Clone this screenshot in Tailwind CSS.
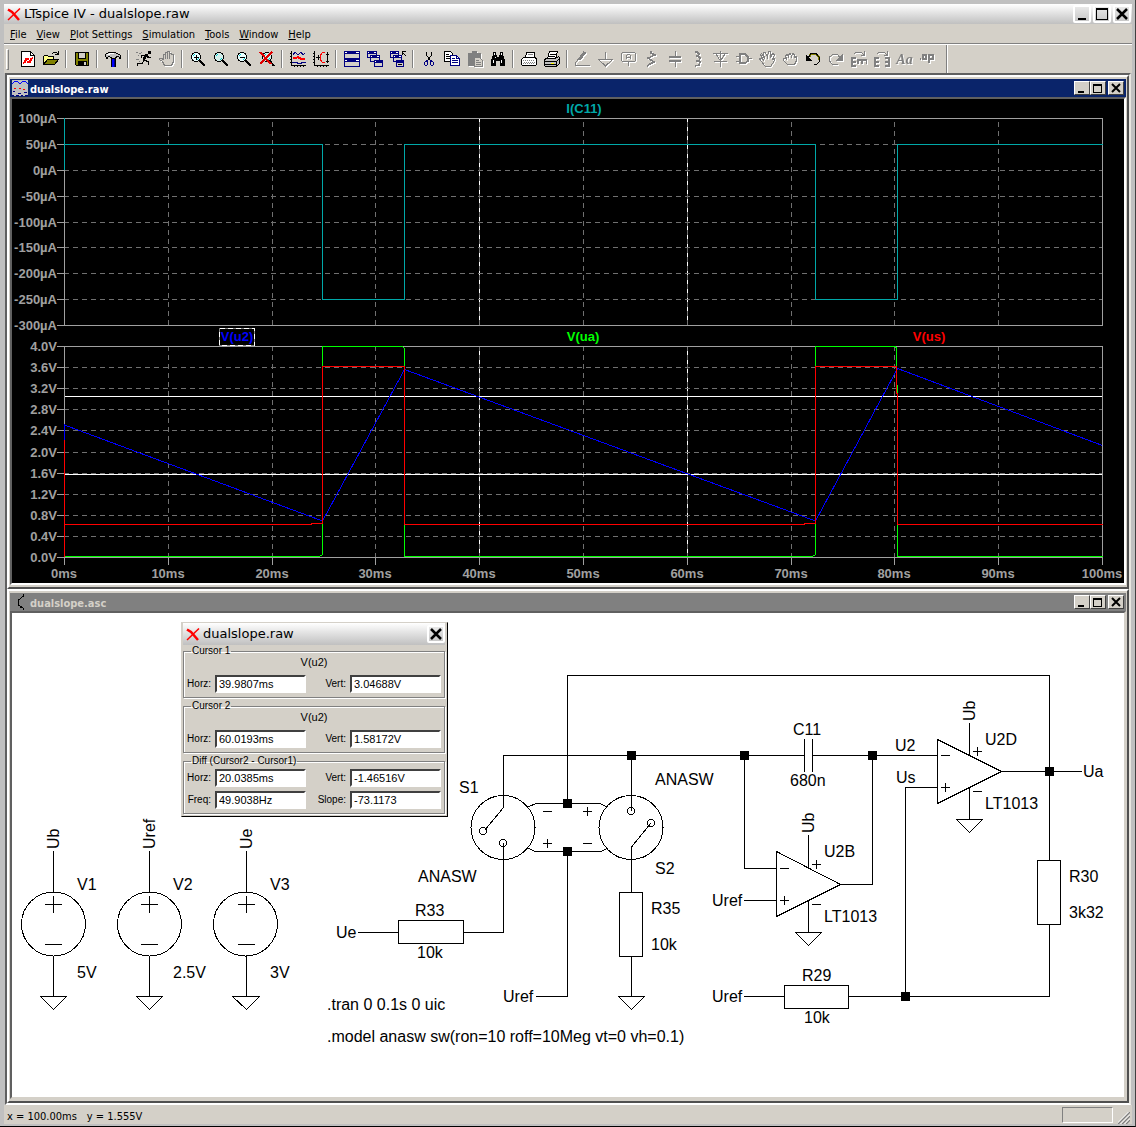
<!DOCTYPE html>
<html lang="en">

<head>
    <meta charset="UTF-8">
    <meta name="viewport" content="width=device-width, initial-scale=1.0">
    <title>LTspice IV - dualslope.raw</title>
    <script src="https://cdn.jsdelivr.net/npm/@tailwindcss/browser@4"></script>
</head>

<body class="bg-black text-black text-[11px] font-['DejaVu_Sans_Condensed','DejaVu_Sans',sans-serif]">

    <div class="h-screen flex flex-col bg-[#c0c0c0] pt-1 pl-1 pr-[3px] pb-[2px] border-r border-b border-r-[#404040] border-b-black">

        <!-- title bar -->
        <header class="h-5 shrink-0 flex items-center bg-linear-to-b from-white to-[#c0c0c0] pl-[3px] pr-px">
            <svg class="w-[14px] h-[13px]" viewBox="0 0 14 13" fill="none" stroke="#f00"><path stroke-width="2.5" d="M1 1.5 5 4l7 8"/><path stroke-width="1.5" d="M13 .5 1 12"/></svg>
            <h1 class="ml-[3px] text-[13px] leading-5 font-['DejaVu_Sans',sans-serif] whitespace-nowrap">LTspice IV - dualslope.raw</h1>
            <div class="ml-auto flex gap-[2px]">
                <button aria-label="Minimize" class="size-[18px] rounded-xs border-2 border-white bg-linear-to-b from-[#e8e8e8] to-[#c8c8c8]"><svg class="size-[14px]" viewBox="0 0 14 14"><path d="M3 11h8v2H3z"/></svg></button>
                <button aria-label="Maximize" class="size-[18px] rounded-xs border-2 border-white bg-linear-to-b from-[#e8e8e8] to-[#c8c8c8]"><svg class="size-[14px]" viewBox="0 0 14 14"><path fill-rule="evenodd" d="M1 1h12v12H1zM2 3v9h10V3z"/></svg></button>
                <button aria-label="Close" class="size-[18px] rounded-xs border-2 border-white bg-linear-to-b from-[#e8e8e8] to-[#c8c8c8]"><svg class="size-[14px]" viewBox="0 0 14 14" stroke="#000" stroke-width="2.5"><path d="M2 2l10 10M12 2 2 12"/></svg></button>
            </div>
        </header>

        <!-- menu -->
        <nav class="h-5 shrink-0 flex items-center gap-[10px] bg-[#d4d0c8] pl-[6px] pt-1 border-b border-[#808080]">
            <button><u>F</u>ile</button>
            <button><u>V</u>iew</button>
            <button><u>P</u>lot Settings</button>
            <button><u>S</u>imulation</button>
            <button><u>T</u>ools</button>
            <button><u>W</u>indow</button>
            <button><u>H</u>elp</button>
        </nav>

        <!-- toolbar -->
        <div class="h-[29px] shrink-0 flex bg-[#d4d0c8] border-t border-white">
            <div class="flex items-center pl-[2px] pr-[7px] border-r border-[#808080] [&_svg]:size-4 [&_svg]:[shape-rendering:crispEdges] [&_button]:w-[23px] [&_button]:h-6 [&_button]:flex [&_button]:items-center [&_button]:justify-center [&_i]:w-px [&_i]:h-[18px] [&_i]:mx-[3px] [&_i]:bg-[#808080] [&_i]:border-r [&_i]:border-white [&_i]:box-content [&_button:disabled]:text-[#808080] [&_button:disabled]:drop-shadow-[1px_1px_0_#fff]">
                <span class="w-[3px] h-[21px] mr-[7px] border border-l-white border-t-white border-r-[#808080] border-b-[#808080]"></span>

                <button title="New Schematic"><svg viewBox="0 0 16 16"><path fill="#fff" stroke="#000" d="M1.500.5h9l4 4v10.500h-13z"/><path fill="none" stroke="#000" d="M10.500.5v4h4"/><path fill="none" stroke="#f00" stroke-width="2" d="M3 12l2-1 1-3h3M7 11h3l1-3 2-1"/></svg></button>
                <button title="Open"><svg viewBox="0 0 16 16"><path fill="#ff8" stroke="#000" d="M.5 13.500V5.500l1-1h3l1 1h5v3h-6z"/><path fill="#808000" stroke="#000" d="M.5 13.500l4-5h11l-4 5z"/><path fill="none" stroke="#000" d="M9 3l2-2h2l2 2M15.500 0v4M12 3.500h3"/></svg></button>
                <i></i>
                <button title="Save"><svg viewBox="0 0 16 16"><path fill="#808000" stroke="#000" d="M1.500 1.500h13v13h-12l-1-1z"/><path fill="#d4d0c8" stroke="#000" d="M4.500 1.500h7v6h-7z"/><path d="M4 10h9v5H4z"/><path fill="#d4d0c8" d="M10 11h2v3h-2z"/></svg></button>
                <i></i>
                <button title="Control Panel"><svg viewBox="0 0 16 16"><path d="M3 1h8v1h2v1h2v1h1v4h-2V6h-2v1h-2v1H6V7H5V6H3v2H1V6H0V3h1V2h2z"/><path fill="#c0c0c0" d="M3 2h8v1h2v1h2v2h-1V5h-3v1h-1v1H7V6H5V5H3v1H1V3h2z"/><path fill="#fff" d="M4 2h5v1H4zM2 3h3v1H2z"/><path d="M6 7h5v9H6z"/><path fill="#00f" d="M7 8h2v8H7z"/><path fill="#000080" d="M9 8h1v8H9z"/></svg></button>
                <i></i>
                <button title="Run"><svg viewBox="0 0 16 16"><path d="M12 0h3v3h-3zM9 3h3v2h1v1h2v1h-4V6h-1v2H9v1h2v1h2v4h-1v-3h-2v-1H8v1H7v2H2v2H1v-3h5v-1h1V6h1V5H6v2H5V4h4z"/><path fill="#808080" d="M0 1h2v1H0zM3 2h2v1H3zM2 4h1v1H2zM5 1h1v1H5zM0 8h3v1H0zM3 10h1v1H3z"/></svg></button>
                <button title="Halt" disabled><svg viewBox="0 0 16 16" fill="#d4d0c8" stroke="currentColor"><path d="M5.500 14.500l-2-4-3-2v-1h2l2 1V3.500h2v-2h2v-1h2v2h2v1h2v7l-2 4zM6.500 4v4M8.500 2v6M10.500 3v5"/></svg></button>
                <i></i>
                <button title="Zoom Area"><svg viewBox="0 0 16 16" fill="none" stroke="#000"><circle cx="6" cy="6" r="4.500" fill="#e8ffff"/><path stroke="#0cc" d="M3 5l2-2M7 9l2-2"/><path d="M6.500 3.500v5M4 6.500h5"/><path stroke-width="2" d="M10 10l5 5"/></svg></button>
                <button title="Pan"><svg viewBox="0 0 16 16" fill="none" stroke="#000"><circle cx="6" cy="6" r="4.500" fill="#d4f0ec"/><path stroke="#0cc" d="M3 5l2-2M7 9l2-2"/><path stroke-width="2" d="M10 10l5 5"/></svg></button>
                <button title="Zoom Back"><svg viewBox="0 0 16 16" fill="none" stroke="#000"><circle cx="6" cy="6" r="4.500" fill="#e8ffff"/><path stroke="#0cc" d="M3 5l2-2M7 9l2-2"/><path d="M4 6.500h5"/><path stroke-width="2" d="M10 10l5 5"/></svg></button>
                <button title="Zoom Fit"><svg viewBox="0 0 16 16" fill="none" stroke="#000"><circle cx="8" cy="6" r="4.500" fill="#d4f0ec"/><path stroke="#0cc" d="M5 5l2-2M9 9l2-2"/><path stroke-width="2" d="M11 10l4 5"/><path stroke="#e00000" stroke-width="2" d="M1 1l11 12M13 1 1 13"/></svg></button>
                <i></i>
                <button title="Autorange Y"><svg viewBox="0 0 16 16" fill="none" stroke="#000"><path d="M1.500 0v14.500H16M0 2.500h1M0 5.500h1M0 8.500h1M0 11.500h1M4.500 15v1M7.500 15v1M10.500 15v1M13.500 15v1"/><path stroke="#000080" d="M3 4l2-3 3 3 3-3 2 3 2-2M2 11.500h5l1 1h3l1-1h4"/><path stroke="#f00" stroke-width="2" d="M3 7h3l2-1 3 2h4"/></svg></button>
                <button title="Autorange"><svg viewBox="0 0 16 16" fill="none" stroke="#000"><path d="M1.500 0v14.500H16M0 2.500h1M0 5.500h1M0 8.500h1M0 11.500h1M4.500 15v1M7.500 15v1M10.500 15v1M13.500 15v1M14.500 1v11M13 3.500h3M13 10.500h3M3 6.500h4M5.500 4v5"/><path stroke="#f00" d="M12 1.500H9.500L7.500 4v5l2 2.500H12"/></svg></button>
                <i></i>
                <button title="Tile Windows"><svg viewBox="0 0 16 16"><path fill="#d4d0c8" stroke="#000080" d="M.5.5h15v7H.5zM.5 8.500h15v7H.5z"/><path fill="#000080" d="M0 0h16v3H0zM0 8h16v3H0z"/><path fill="#fff" d="M1 1h2v1H1zM12 1h3v1h-3zM1 9h2v1H1zM12 9h3v1h-3z"/></svg></button>
                <button title="Cascade Windows"><svg viewBox="0 0 16 16"><g fill="#d4d0c8" stroke="#000080"><path d="M.5.5h9v6h-9z"/><path d="M3.500 4.500h9v6h-9z"/><path d="M7.500 9.500h8v6h-8z"/></g><path fill="#000080" d="M0 0h10v3H0zM3 4h10v3H3zM7 9h9v3H7z"/><path fill="#fff" d="M1 1h1v1H1zM7 1h2v1H7zM4 5h1v1H4zM10 5h2v1h-2zM8 10h1v1H8z"/></svg></button>
                <button title="Close All"><svg viewBox="0 0 16 16"><g fill="#d4d0c8" stroke="#000080"><path d="M.5.5h8v6h-8z"/><path d="M3.500 4.500h8v6h-8z"/><path d="M6.500 9.500h7v6h-7z"/></g><path fill="#000080" d="M0 0h9v3H0zM3 4h9v3H3zM6 9h8v3H6z"/><path fill="#fff" d="M1 1h1v1H1zM6 1h2v1H6zM4 5h1v1H4zM9 5h2v1H9z"/><path fill="none" stroke="#000" d="M16 5l-4-4M12.500 4V.5H16M8 13.500h4"/></svg></button>
                <i></i>
                <button title="Cut"><svg viewBox="0 0 16 16" fill="none" stroke="#000"><path d="M5.500 1v3l4 6M10.500 1v3l-4 6"/><g stroke="#000080"><path d="M6.500 9.500l-2 1-1 1v2l1 1h1l1-1v-3zM9.500 9.500l2 1 1 1v2l-1 1h-1l-1-1v-3z"/></g></svg></button>
                <button title="Copy"><svg viewBox="0 0 16 16"><path fill="#fff" stroke="#000" d="M.5.5h6l2 2v8h-8z"/><path stroke="#000" d="M2 3.500h3M2 5.500h5M2 7.500h5"/><path fill="#fff" stroke="#000080" d="M6.500 4.500h6l3 3v7h-9z"/><path stroke="#000080" d="M8 7.500h3M8 9.500h6M8 11.500h6M12.500 4v3h3" fill="none"/></svg></button>
                <button title="Paste" disabled><svg viewBox="0 0 16 16"><path fill="#808080" d="M1 2h4V0h5v2h4v5H8v8H1z"/><path fill="#d4d0c8" stroke="#808080" d="M7.500 6.500h5l3 3v6h-8z"/><path stroke="#808080" d="M9 9.500h3M9 11.500h5M9 13.500h5"/></svg></button>
                <button title="Find"><svg viewBox="0 0 16 16"><path d="M3 1h3v3h1v2h2V4h1V1h3v3l2 5v6h-5v-5H6v5H1V9l2-5z"/><path fill="#fff" d="M4 2h1v2H4zM11 2h1v2h-1zM3 9h1v3H3zM11 9h1v3h-1zM5 6h1v1H5z"/></svg></button>
                <i></i>
                <button title="Print Setup"><svg viewBox="0 0 16 16"><path fill="#fff" stroke="#000" d="M4.500 6.500l1-5h8v5"/><path stroke="#808080" d="M7 3.500h5"/><path fill="#fff" stroke="#000" d="M.5 8.500l2-2h12l1 2v5l-1 1h-13l-1-1z"/><path stroke="#808080" stroke-dasharray="1 1" d="M2 9.500h12M3 11.500h11M2 12.500h12"/></svg></button>
                <button title="Print"><svg viewBox="0 0 16 16"><path fill="#fff" stroke="#000" d="M3.500 7.500l2-7h8l-2 7"/><path stroke="#000" d="M6 3.500h6M5 5.500h6"/><path fill="#c0c0c0" stroke="#000" d="M.5 8.500l2-1h9l3-2 1 1v6l-3 3h-11l-1-1z"/><path stroke="#000" fill="none" d="M.5 10.500h12l3-3M12.500 10v5M1 13.500h11"/><path fill="#ff0" d="M7 12h3v1H7z"/></svg></button>
                <i></i>
                <button title="Wire" disabled><svg viewBox="0 0 16 16" fill="none" stroke="currentColor"><path stroke-width="3" d="M10 1 4 9"/><path d="M3.500 8l-3 4v2.500H15"/></svg></button>
                <button title="Ground" disabled><svg viewBox="0 0 16 16" fill="none" stroke="currentColor"><path d="M7.500 1v7M0 8.500h15M1 9l6.500 6L14 9"/></svg></button>
                <button title="Label Net" disabled><svg viewBox="0 0 16 16" fill="none" stroke="currentColor"><path d="M1.500 1.500h12l1 1v7l-1 1h-12l-1-1v-7zM7.500 11v4M5.500 8V4.500l1-1h2l1 1V8M5 6.500h5"/></svg></button>
                <button title="Resistor" disabled><svg viewBox="0 0 16 16" fill="none" stroke="currentColor"><path stroke-width="1.500" d="M7 0v2l4 2-7 3 6 4-4 2-3 2"/></svg></button>
                <button title="Capacitor" disabled><svg viewBox="0 0 16 16" fill="none" stroke="currentColor"><path stroke-width="2" d="M2 6h12M2 10h12"/><path d="M8.500 0v5M8.500 11v5"/></svg></button>
                <button title="Inductor" disabled><svg viewBox="0 0 16 16" fill="none" stroke="currentColor"><path stroke-width="1.500" d="M5 1h2l2 2-1 2H6h2l2 2-1 3H6h2l2 1-1 3-4 1"/></svg></button>
                <button title="Diode" disabled><svg viewBox="0 0 16 16" fill="none" stroke="currentColor"><path d="M0 2.500h15M3 3l4.500 7L12 3M1 10.500h13M7.500 0v16"/></svg></button>
                <button title="Component" disabled><svg viewBox="0 0 16 16" fill="none" stroke="currentColor"><path stroke-width="1.500" d="M4 3h5l3 3v4l-3 2H4z"/><path d="M0 5.500h4M0 10.500h4M12 7.500h4"/></svg></button>
                <button title="Move" disabled><svg viewBox="0 0 16 16" fill="none" stroke="currentColor"><path d="M6.500 15.500l-5-6-1-2h2l2 2-3-6 1-1 3 5-1-6h2l2 5 1-6h2v6l2-4 2 1-2 5 2-1v2l-4 6z"/></svg></button>
                <button title="Drag" disabled><svg viewBox="0 0 16 16" fill="none" stroke="currentColor"><path d="M5.500 13.500l-4-4v-2h2l1 1-1-4 2-1 1 3v-3l2-1 1 3 1-3 2 1v3l2-1v4l-2 4z"/></svg></button>
                <button title="Undo"><svg viewBox="0 0 16 16" fill="none" stroke="#000"><path stroke="#808000" stroke-width="2" d="M4 6l2-3h5l3 3v3"/><path d="M3 7l3-4.500h5l3.500 4v4l-3 3h-3M1.500 4v5.500H7"/><path fill="#000" d="M1 4l5 5H1z"/></svg></button>
                <button title="Redo" disabled><svg viewBox="0 0 16 16" fill="none" stroke="currentColor"><path d="M12 7 9.500 3.500H5L1.500 6v4l3 3.500h5"/><path fill="currentColor" d="M14 4v5H9z"/></svg></button>
                <button title="Rotate" disabled><svg viewBox="0 0 16 16" fill="none" stroke="currentColor"><path d="M3 3l2-2h5l3 3M13.500 0v4.500H10"/><path stroke-width="1.500" d="M5 7H1v8h4M1 11h4M7 13V9h9v4M11 9v4"/></svg></button>
                <button title="Mirror" disabled><svg viewBox="0 0 16 16" fill="none" stroke="currentColor"><path d="M3 3l2-2h5l3 3M13.500 0v4.500H10"/><path stroke-width="1.500" d="M5 7H1v8h4M1 11h4M11 7h4v8h-4M15 11h-4"/></svg></button>
                <button title="Text" disabled class="font-['Liberation_Serif',serif] italic font-bold text-[14px]">Aa</button>
                <button title="SPICE Directive" disabled><svg viewBox="0 0 16 16" fill="none" stroke="currentColor"><path stroke-width="1.500" d="M3 4h3v4H3zM9 12V4h4v4H9M0 8h1"/></svg></button>
            </div>
            <div class="border-l border-white"></div>
        </div>

        <!-- MDI area -->
        <main class="mx-px flex-1 min-h-0 flex flex-col border-2 border-t-[#606060] border-l-[#606060] border-r-[#e8e6e0] border-b-white bg-[#808080]">

            <!-- waveform window -->
            <section class="flex-1 min-h-0 flex flex-col bg-[#d4d0c8] border-2 border-t-white border-l-white border-r-[#505050] border-b-[#505050] px-px py-[2px]">
                <div class="h-[18px] shrink-0 flex items-center bg-[#0a246a] text-white px-[2px]">
                    <svg class="size-4" viewBox="0 0 16 16" fill="none" shape-rendering="crispEdges"><path fill="#c0c0c0" d="M0 0h16v16H0z"/><path stroke="#00f" d="M0 4l3-3h2l3 3 3-3h2l3 3"/><path fill="#f00" d="M2 8h2v1H2zM7 8h2v1H7zM11 9h2v1h-2z"/><path stroke="#000080" d="M1 12l2-1M6 13h3M12 12h3M0 15.500h2M4 15.500h3M9 15.500h2M13 15.500h3"/></svg>
                    <h2 class="ml-[2px] pt-[3px] font-bold leading-4">dualslope.raw</h2>
                    <div class="ml-auto flex">
                        <button aria-label="Minimize plot" class="w-4 h-[14px] bg-[#d4d0c8] border border-t-white border-l-white border-r-[#404040] border-b-[#404040]"><svg class="w-[14px] h-3" viewBox="0 0 14 12"><path d="M3 9h6v2H3z"/></svg></button>
                        <button aria-label="Maximize plot" class="w-4 h-[14px] bg-[#d4d0c8] border border-t-white border-l-white border-r-[#404040] border-b-[#404040]"><svg class="w-[14px] h-3" viewBox="0 0 14 12"><path fill-rule="evenodd" d="M2 2h9v9H2zM3 4v6h7V4z"/></svg></button>
                        <button aria-label="Close plot" class="ml-[2px] w-4 h-[14px] bg-[#d4d0c8] border border-t-white border-l-white border-r-[#404040] border-b-[#404040]"><svg class="w-[14px] h-3" viewBox="0 0 14 12" stroke="#000" stroke-width="2"><path d="M3 2l8 8M11 2l-8 8"/></svg></button>
                    </div>
                </div>
                <div class="flex-1 min-h-0 bg-black border-2 border-t-[#606060] border-l-[#606060] border-r-white border-b-white">
                    <svg class="block w-full h-full font-['Liberation_Sans',sans-serif] font-bold text-[13px]" viewBox="12 99 1112 484" fill="none" shape-rendering="crispEdges">
                        <!-- cursors -->
                        <path stroke="#fff" d="M479.500 118v207M687.500 118v207M479.500 346v211M687.500 346v211"/>
                        <!-- grid -->
                        <g stroke="#707070" stroke-dasharray="5 4">
                            <path d="M168.500 122v203M272.500 122v203M375.500 122v203M479.500 122v203M583.500 122v203M687.500 122v203M791.500 122v203M894.500 122v203M998.500 122v203"/>
                            <path d="M64 144.500h1038M64 170.500h1038M64 196.500h1038M64 222.500h1038M64 247.500h1038M64 273.500h1038M64 299.500h1038"/>
                            <path d="M168.500 346v211M272.500 346v211M375.500 346v211M479.500 346v211M583.500 346v211M687.500 346v211M791.500 346v211M894.500 346v211M998.500 346v211"/>
                            <path d="M64 367.500h1038M64 388.500h1038M64 409.500h1038M64 430.500h1038M64 452.500h1038M64 473.500h1038M64 494.500h1038M64 515.500h1038M64 536.500h1038"/>
                        </g>
                        <!-- frames and ticks -->
                        <g stroke="#a0a0a0">
                            <path d="M64.500 118.500h1038v207h-1038zM64.500 346.500h1038v211h-1038z"/>
                            <path d="M57 118.500h7M57 144.500h7M57 170.500h7M57 196.500h7M57 222.500h7M57 247.500h7M57 273.500h7M57 299.500h7M57 325.500h7"/>
                            <path d="M57 346.500h7M57 367.500h7M57 388.500h7M57 409.500h7M57 430.500h7M57 452.500h7M57 473.500h7M57 494.500h7M57 515.500h7M57 536.500h7M57 557.500h7"/>
                            <path d="M64.500 557v8M168.500 557v8M272.500 557v8M375.500 557v8M479.500 557v8M583.500 557v8M687.500 557v8M791.500 557v8M894.500 557v8M998.500 557v8M1102.500 557v8"/>
                        </g>
                        <!-- traces -->
                        <path stroke="#00a8a8" d="M64.500 170v-52M64.500 144.500h258v155h82v-155h411v155h82v-155h205"/>
                        <path stroke="#fff" d="M65 396.500h1037M65 474.500h1037"/>
                        <path stroke="#00f" d="M64.500 440v-15l258 96L404.500 369.500l411 151.500L897.500 368.500l205 77"/>
                        <path stroke="#0f0" d="M64.500 556.500h255l3-2v-208h80l2 2v208h408l3-2v-208h80l1 2v36l1 2v170h205"/>
                        <path stroke="#f00" d="M64.500 557V440M64.500 524.500h247v-1h11v-157h82v158h400v-1h11v-157h81v27h1v131h205"/>
                        <!-- y axis -->
                        <g fill="#a0a0a0" text-anchor="end">
                            <text x="57" y="123">100µA</text><text x="57" y="149">50µA</text><text x="57" y="175">0µA</text>
                            <text x="57" y="201">-50µA</text><text x="57" y="227">-100µA</text><text x="57" y="252">-150µA</text>
                            <text x="57" y="278">-200µA</text><text x="57" y="304">-250µA</text><text x="57" y="330">-300µA</text>
                            <text x="57" y="351">4.0V</text><text x="57" y="372">3.6V</text><text x="57" y="393">3.2V</text>
                            <text x="57" y="414">2.8V</text><text x="57" y="435">2.4V</text><text x="57" y="457">2.0V</text>
                            <text x="57" y="478">1.6V</text><text x="57" y="499">1.2V</text><text x="57" y="520">0.8V</text>
                            <text x="57" y="541">0.4V</text><text x="57" y="562">0.0V</text>
                        </g>
                        <!-- x axis -->
                        <g fill="#a0a0a0" text-anchor="middle">
                            <text x="64" y="578">0ms</text><text x="168" y="578">10ms</text><text x="272" y="578">20ms</text>
                            <text x="375" y="578">30ms</text><text x="479" y="578">40ms</text><text x="583" y="578">50ms</text>
                            <text x="687" y="578">60ms</text><text x="791" y="578">70ms</text><text x="894" y="578">80ms</text>
                            <text x="998" y="578">90ms</text><text x="1102" y="578">100ms</text>
                        </g>
                        <!-- trace labels -->
                        <path stroke="#808080" d="M219.500 328.500h35v17h-35z"/>
                        <path stroke="#fff" stroke-dasharray="5 3" d="M219.500 328.500h35v17h-35z"/>
                        <g text-anchor="middle">
                            <text x="584" y="113" fill="#00a8a8">I(C11)</text>
                            <text x="237" y="341" fill="#00f">V(u2)</text>
                            <text x="583" y="341" fill="#0f0">V(ua)</text>
                            <text x="929" y="341" fill="#f00">V(us)</text>
                        </g>
                    </svg>
                </div>
            </section>

            <!-- schematic window -->
            <section class="flex-1 min-h-0 flex flex-col bg-[#d4d0c8] border-2 border-t-white border-l-white border-r-[#505050] border-b-[#505050] px-px py-[2px]">
                <div class="h-[18px] shrink-0 flex items-center bg-[#808080] text-[#d4d0c8] px-[2px]">
                    <svg class="size-4" viewBox="0 0 16 16" fill="none" shape-rendering="crispEdges"><path stroke="#000" d="M11.500 0v2l-5 4v5l3 2M8 13l3 1v2"/></svg>
                    <h2 class="ml-[2px] pt-[3px] font-bold leading-4">dualslope.asc</h2>
                    <div class="ml-auto flex">
                        <button aria-label="Minimize schematic" class="w-4 h-[14px] bg-[#d4d0c8] border border-t-white border-l-white border-r-[#404040] border-b-[#404040]"><svg class="w-[14px] h-3" viewBox="0 0 14 12"><path d="M3 9h6v2H3z"/></svg></button>
                        <button aria-label="Maximize schematic" class="w-4 h-[14px] bg-[#d4d0c8] border border-t-white border-l-white border-r-[#404040] border-b-[#404040]"><svg class="w-[14px] h-3" viewBox="0 0 14 12"><path fill-rule="evenodd" d="M2 2h9v9H2zM3 4v6h7V4z"/></svg></button>
                        <button aria-label="Close schematic" class="ml-[2px] w-4 h-[14px] bg-[#d4d0c8] border border-t-white border-l-white border-r-[#404040] border-b-[#404040]"><svg class="w-[14px] h-3" viewBox="0 0 14 12" stroke="#000" stroke-width="2"><path d="M3 2l8 8M11 2l-8 8"/></svg></button>
                    </div>
                </div>
                <div class="relative flex-1 min-h-0 bg-white border-2 border-t-[#606060] border-l-[#606060] border-r-[#d4d0c8] border-b-[#d4d0c8]">
                    <svg class="block w-full h-full font-['Liberation_Sans',sans-serif] text-[16px]" viewBox="12 613 1112 484">
                        <g fill="none" stroke="#000" shape-rendering="crispEdges">
                            <!-- sources V1 V2 V3 -->
                            <circle cx="53.500" cy="924" r="32"/><circle cx="149.500" cy="924" r="32"/><circle cx="245.500" cy="924" r="32"/>
                            <path d="M53.500 851v41M53.500 956v40M45 904.500h17M53.500 896v17M45 944.500h17M40.500 996.500h26l-13 13z"/>
                            <path d="M149.500 851v41M149.500 956v40M141 904.500h17M149.500 896v17M141 944.500h17M136.500 996.500h26l-13 13z"/>
                            <path d="M246.500 851v41M246.500 956v40M238 904.500h17M246.500 896v17M238 944.500h17M232.500 996.500h27l-13 13z"/>
                            <!-- switches -->
                            <circle cx="503" cy="827.500" r="32"/><circle cx="631" cy="827.500" r="32"/>
                            <circle cx="483" cy="831" r="3.500"/><circle cx="503" cy="843" r="3.500"/>
                            <circle cx="631" cy="811" r="3.500"/><circle cx="651" cy="823" r="3.500"/>
                            <path d="M503.500 755.500v52l-19 23M503.500 843v89.500M631.500 755v56M651 823l-19.500 24v45"/>
                            <path d="M528 807l8-3.500h64l6 3M528 848l7 3.500h66l6-3"/>
                            <path d="M543 811.500h9M583 811.500h9M587.500 807v9M543 843.500h9M547.500 839v9M583 843.500h9"/>
                            <!-- wires -->
                            <path d="M567.500 803V675.500h482V860M503 755.500h301M812 755.500h125M567.500 851v145.500h-32"/>
                            <path d="M358 932.500h40M463 932.500h41M631.500 956v40M744.500 755v113.500h32M872.500 755v129.500h-32M744 900.500h32"/>
                            <path d="M937 787.500h-31.500v209M1001 771.500h81M1049.500 924v72.500H848M744 996.500h40"/>
                            <!-- R33 R35 R30 R29 C11 -->
                            <path d="M398.500 920.500h65v23h-65zM619.500 892.500h23v64h-23zM1037.500 860.500h23v64h-23zM784.500 985.500h64v23h-64zM804.500 739v33M812.500 739v33"/>
                            <path d="M618.500 996.500h26l-13 13z"/>
                            <!-- op amps -->
                            <path d="M937.500 739.500v64l64-32zM969.500 723v32M969.500 788v31M956.500 819.500h26l-13 13z"/>
                            <path d="M941 755.500h9M941 787.500h9M945.500 783v9M973 751.500h9M977.500 747v9M973 791.500h9"/>
                            <path d="M776.500 851.500v65l64-32zM808.500 835v33M808.500 901v31M795.500 932.500h26l-13 13z"/>
                            <path d="M780 868.500h9M780 900.500h9M784.500 896v9M812 864.500h9M816.500 860v9M812 904.500h9"/>
                        </g>
                        <!-- junctions -->
                        <path d="M627 751h9v9h-9zM740 751h9v9h-9zM868 751h9v9h-9zM1045 767h9v9h-9zM563 799h9v9h-9zM563 847h9v9h-9zM901 992h9v9h-9z"/>

                        <text transform="translate(59 849) rotate(-90)">Ub</text>
                        <text transform="translate(155 849) rotate(-90)">Uref</text>
                        <text transform="translate(252 849) rotate(-90)">Ue</text>
                        <text x="77" y="890">V1</text><text x="173" y="890">V2</text><text x="270" y="890">V3</text>
                        <text x="77" y="978">5V</text><text x="173" y="978">2.5V</text><text x="270" y="978">3V</text>

                        <text x="459" y="793">S1</text><text x="655" y="785">ANASW</text>
                        <text x="655" y="874">S2</text><text x="418" y="882">ANASW</text>
                        <text x="336" y="938">Ue</text><text x="415" y="916">R33</text><text x="417" y="958">10k</text>
                        <text x="651" y="914">R35</text><text x="651" y="950">10k</text><text x="503" y="1002">Uref</text>
                        <text x="327" y="1010">.tran 0 0.1s 0 uic</text>
                        <text x="327" y="1042">.model anasw sw(ron=10 roff=10Meg vt=0 vh=0.1)</text>

                        <text x="793" y="735">C11</text><text x="790" y="786">680n</text>
                        <text x="895" y="751">U2</text><text x="896" y="783">Us</text>
                        <text transform="translate(975 721) rotate(-90)">Ub</text>
                        <text transform="translate(814 833) rotate(-90)">Ub</text>
                        <text x="985" y="745">U2D</text><text x="985" y="809">LT1013</text>
                        <text x="824" y="857">U2B</text><text x="824" y="922">LT1013</text>
                        <text x="1083" y="777">Ua</text><text x="712" y="906">Uref</text><text x="712" y="1002">Uref</text>
                        <text x="802" y="981">R29</text><text x="804" y="1023">10k</text>
                        <text x="1069" y="882">R30</text><text x="1069" y="918">3k32</text>
                    </svg>

                    <!-- cursor readout -->
                    <div class="absolute left-[169px] top-[9px] w-[267px] bg-[#d4d0c8] border border-t-[#d4d0c8] border-l-[#d4d0c8] border-r-black border-b-black pl-px pr-[2px] pb-[2px] font-['Liberation_Sans',sans-serif] text-[10px] leading-3">
                        <div class="h-[22px] flex items-center bg-linear-to-b from-white to-[#c0c0c0] pl-[3px]">
                            <svg class="w-[14px] h-[13px]" viewBox="0 0 14 13" fill="none" stroke="#f00"><path stroke-width="2.500" d="M1 1.500 5 4l7 8"/><path stroke-width="1.500" d="M13 .5 1 12"/></svg>
                            <h3 class="ml-[3px] text-[13px] font-['DejaVu_Sans',sans-serif]">dualslope.raw</h3>
                            <button aria-label="Close readout" class="ml-auto size-[18px] rounded-xs border-2 border-white bg-linear-to-b from-[#e8e8e8] to-[#c8c8c8]"><svg class="size-[14px]" viewBox="0 0 14 14" stroke="#000" stroke-width="2.500"><path d="M2 2l10 10M12 2 2 12"/></svg></button>
                        </div>
                        <div class="flex flex-col gap-[2px] [&_fieldset]:border [&_fieldset]:border-[#808080] [&_fieldset]:shadow-[1px_1px_0_#fff,inset_1px_1px_0_#fff] [&_fieldset]:px-[3px] [&_fieldset]:pb-1 [&_legend]:ml-1 [&_legend]:px-px [&_input]:w-[91px] [&_input]:h-[18px] [&_input]:px-[2px] [&_input]:bg-white [&_input]:text-[11px] [&_input]:border-2 [&_input]:border-t-[#404040] [&_input]:border-l-[#404040] [&_input]:border-r-white [&_input]:border-b-white [&_label]:text-right [&_label]:pr-1">
                            <fieldset>
                                <legend>Cursor 1</legend>
                                <p class="text-center text-[11px] leading-[10px] mb-2">V(u2)</p>
                                <div class="grid grid-cols-[28px_91px_44px_91px] items-center">
                                    <label for="h1">Horz:</label><input id="h1" value="39.9807ms" readonly>
                                    <label for="v1">Vert:</label><input id="v1" value="3.04688V" readonly>
                                </div>
                            </fieldset>
                            <fieldset>
                                <legend>Cursor 2</legend>
                                <p class="text-center text-[11px] leading-[10px] mb-2">V(u2)</p>
                                <div class="grid grid-cols-[28px_91px_44px_91px] items-center">
                                    <label for="h2">Horz:</label><input id="h2" value="60.0193ms" readonly>
                                    <label for="v2">Vert:</label><input id="v2" value="1.58172V" readonly>
                                </div>
                            </fieldset>
                            <fieldset>
                                <legend>Diff (Cursor2 - Cursor1)</legend>
                                <div class="grid grid-cols-[28px_91px_44px_91px] items-center gap-y-1 pt-[2px]">
                                    <label for="hd">Horz:</label><input id="hd" value="20.0385ms" readonly>
                                    <label for="vd">Vert:</label><input id="vd" value="-1.46516V" readonly>
                                    <label for="fd">Freq:</label><input id="fd" value="49.9038Hz" readonly>
                                    <label for="sd">Slope:</label><input id="sd" value="-73.1173" readonly>
                                </div>
                            </fieldset>
                        </div>
                    </div>
                </div>
            </section>
        </main>

        <!-- status bar -->
        <footer class="h-[19px] shrink-0 flex items-center bg-[#d4d0c8] pl-[3px] pt-px">
            <span class="pt-1">x = 100.00ms</span>
            <span class="ml-[10px] pt-1">y = 1.555V</span>
            <span class="ml-auto w-[51px] h-4 border border-t-[#808080] border-l-[#808080] border-r-white border-b-white"></span>
            <svg class="ml-[5px] mr-[2px] w-3 h-3 self-end" viewBox="0 0 12 12" fill="none"><path stroke="#808080" stroke-width="1.500" d="M0 12 12 0M4 12l8-8M8 12l4-4"/><path stroke="#fff" d="M-1.500 12 12-1.500M2.500 12 12 2.500M6.500 12 12 6.500"/></svg>
        </footer>
    </div>

</body>

</html>
